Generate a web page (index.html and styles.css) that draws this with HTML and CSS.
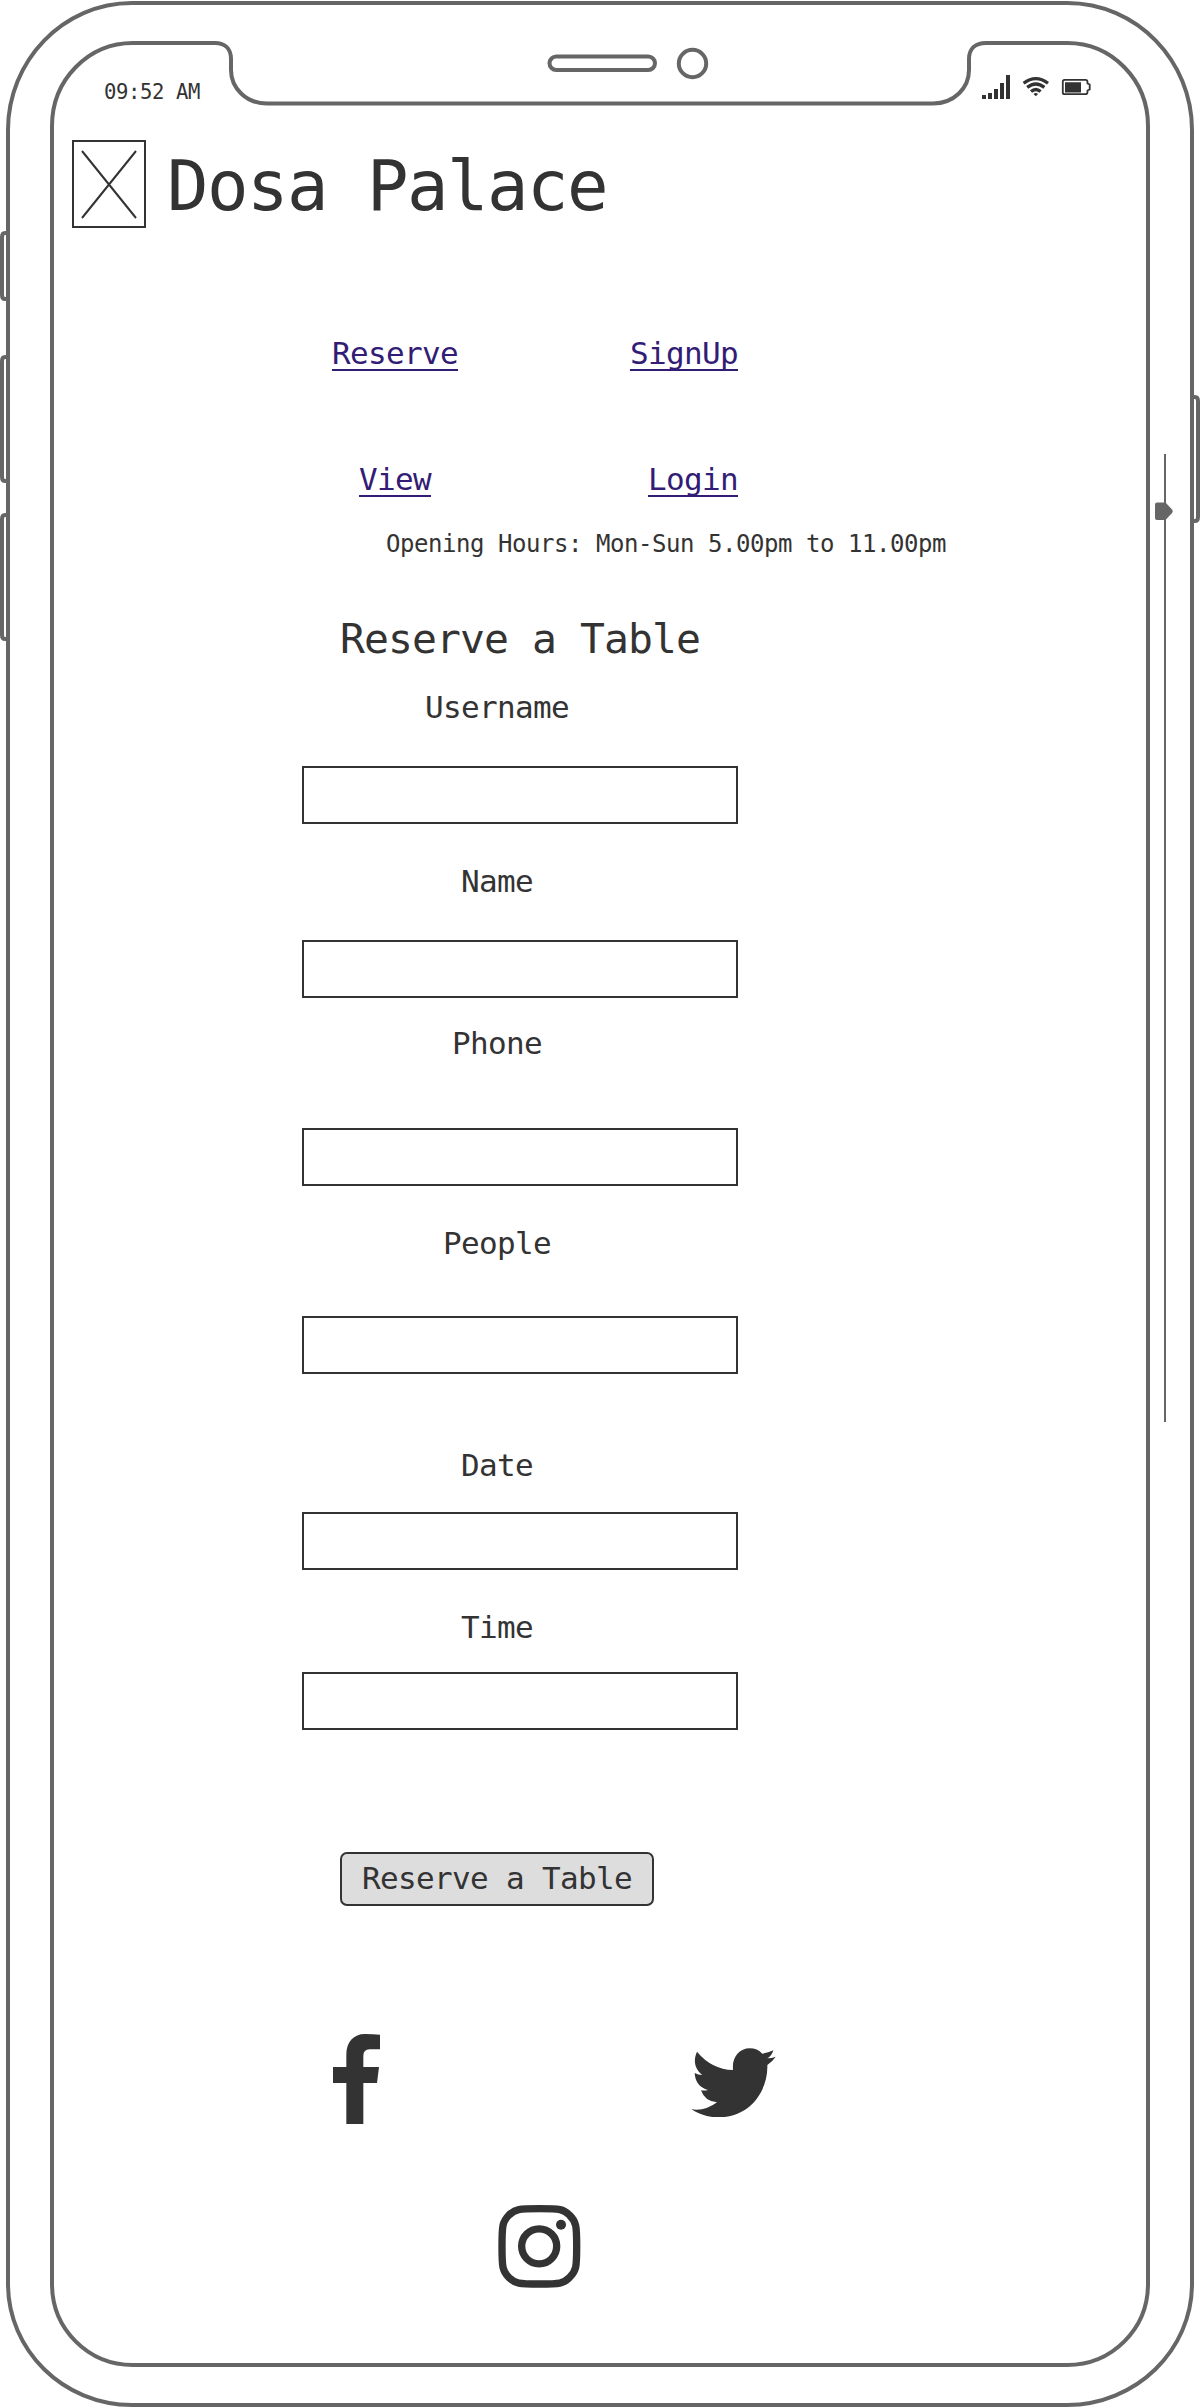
FILE: index.html
```html
<!DOCTYPE html>
<html lang="en">
<head>
<meta charset="utf-8">
<title>Dosa Palace</title>
<link rel="stylesheet" href="styles.css">
</head>
<body>
<div class="phone">
  <svg class="frame" viewBox="0 0 1200 2408" width="1200" height="2408" aria-hidden="true">
    <g fill="none" stroke="#666" stroke-width="4">
      <path d="M132 3H1067C1137 3 1192 61 1192 130V2284C1192 2350 1136 2405 1067 2405H132C63 2405 8 2350 8 2284V130C8 61 63 3 132 3Z"/>
      <path d="M133 43H215C225 43 231 49 231 59V70C231 88 246 103.500 267 103.500H933C954 103.500 969 88 969 70V59C969 49 975 43 986 43H1067C1112 43 1148 80 1148 126V2284C1148 2329 1112 2365 1067 2365H133C88 2365 52 2329 52 2284V126C52 80 88 43 133 43Z"/>
      <rect x="549.500" y="56.500" width="105.500" height="13.500" rx="6.750"/>
      <circle cx="692.500" cy="63.500" r="13.700"/>
      <path d="M8 233H5Q2 233 2 237V295Q2 299 5 299H8M8 357H5Q2 357 2 361V477Q2 481 5 481H8M8 515H5Q2 515 2 519V635Q2 639 5 639H8M1192 397H1195Q1198 397 1198 401V517Q1198 521 1195 521H1192"/>
    </g>
    <path fill="#666" d="M1164 454h2V1422h-2Z"/>
    <path fill="#666" d="M1157 502.500H1165.500L1171.800 509.200Q1173.500 511.300 1171.800 513.300L1165.500 520H1157Q1155 520 1155 518V504.500Q1155 502.500 1157 502.500Z"/>
  </svg>

  <main class="screen">
    <div class="status">
      <span class="time">09:52 AM</span>
      <svg class="status-icons" viewBox="982 74 110 26" width="110" height="26">
        <path fill="#333" d="M982 95h4v4h-4ZM988 93h4v6h-4ZM994 89h4v10h-4ZM1000 83h4v16h-4ZM1006 75h4v24h-4ZM1065 82.300h16v10.200h-16Z"/>
        <g fill="none" stroke="#333" stroke-width="3.300">
          <path d="M1023.600 83.200Q1035.800 74 1048 83.200"/>
          <path d="M1027.200 87.400Q1035.800 80.600 1044.400 87.400"/>
          <path d="M1031 91.600Q1035.800 87.400 1040.600 91.600"/>
        </g>
        <path fill="#333" d="M1033.500 94Q1035.800 92.200 1038.100 94L1035.800 96.300Z"/>
        <path fill="none" stroke="#333" stroke-width="1.800" d="M1064.500 79.800H1085.500Q1087.500 79.800 1087.500 82V83.500L1089.700 84.500V89.500L1087.500 90.500V92Q1087.500 94.200 1085.500 94.200H1064.500Q1062.800 94.200 1062.800 92.500V81.500Q1062.800 79.800 1064.500 79.800Z"/>
      </svg>
    </div>

    <header class="header">
      <svg class="logo" viewBox="0 0 74 88" width="74" height="88">
        <path fill="none" stroke="#333" stroke-width="2" d="M1 1H73V87H1ZM10 11L64 78M64 11L10 78"/>
      </svg>
      <h1 class="title">Dosa Palace</h1>
    </header>

    <nav class="nav">
      <a class="link" href="#">Reserve</a>
      <a class="link link-end" href="#">SignUp</a>
      <a class="link" href="#">View</a>
      <a class="link link-end" href="#">Login</a>
    </nav>

    <p class="hours">Opening Hours: Mon-Sun 5.00pm to 11.00pm</p>

    <form class="form">
      <h2 class="form-title">Reserve a Table</h2>
      <div class="field username"><label for="username">Username</label><input id="username" type="text"></div>
      <div class="field name"><label for="name">Name</label><input id="name" type="text"></div>
      <div class="field phone-no"><label for="phone">Phone</label><input id="phone" type="text"></div>
      <div class="field people"><label for="people">People</label><input id="people" type="text"></div>
      <div class="field date"><label for="date">Date</label><input id="date" type="text"></div>
      <div class="field hour"><label for="time">Time</label><input id="time" type="text"></div>
      <button class="submit" type="button">Reserve a Table</button>
    </form>

    <footer class="social">
      <svg class="facebook" viewBox="0 0 141 270" width="47" height="90">
        <path fill="#333" d="M40 270V147H0V99H40V62C40 24 62 0 96 0Q120 0 141 2V46H110Q91 46 91 66V99H138L132 147H91V270Z"/>
      </svg>
      <svg class="twitter" viewBox="0 0 254 209" width="84.700" height="69.700">
        <path fill="#333" d="M126 66C122 28 145 1 176 1Q199 1 214 17Q231 15 247 7Q242 24 229 31Q242 31 254 26Q244 41 229 51C231 132 174 208 82 208Q38 208 1 184Q43 190 78 163Q41 160 30 127Q41 129 51 126Q13 115 11 75Q21 81 34 81C9 62 7 35 18 11Q62 64 126 66Z"/>
      </svg>
      <svg class="instagram" viewBox="0 0 248 248" width="82.700" height="82.700">
        <path fill="none" stroke="#333" stroke-width="22" d="M124 11C187 11 196 12 214 30C235 50 236 62 236 124C236 186 235 198 214 218C196 236 186 237 124 237C62 237 52 236 33 218C13 198 12 186 12 124C12 62 13 50 33 30C52 12 62 11 124 11Z"/>
        <circle cx="123.500" cy="124" r="52.500" fill="none" stroke="#333" stroke-width="22"/>
        <circle cx="189" cy="59" r="15" fill="#333"/>
      </svg>
    </footer>
  </main>
</div>
</body>
</html>
```
FILE: styles.css
```css
* { box-sizing: border-box; }

body {
  margin: 0;
  background: #fff;
  color: #333;
  font-family: "DejaVu Sans Mono", "Liberation Mono", monospace;
  font-size: 31px;
  line-height: 34px;
  letter-spacing: -0.66px;
}

h1, h2, p { margin: 0; font-weight: 400; }
svg { display: block; }

.phone { position: relative; width: 1200px; height: 2408px; overflow: hidden; }
.frame { position: absolute; top: 0; left: 0; }
.screen { position: relative; display: flex; flex-direction: column; padding: 74px 108px 0 72px; }

.status { display: flex; justify-content: space-between; height: 66px; padding-left: 32px; }
.time { margin-top: 6px; font-size: 20.6px; line-height: 24px; letter-spacing: -0.4px; }

.header { display: flex; gap: 21px; height: 88px; }
.title { margin-top: 6px; font-size: 69px; line-height: 80px; letter-spacing: -1.54px; white-space: nowrap; }

.nav {
  display: grid;
  grid-template-columns: 188px 249px;
  row-gap: 92px;
  margin: 108px 0 0 229px;
}
.link {
  justify-self: center;
  color: #331c75;
  text-decoration: underline;
  text-decoration-thickness: 2px;
  text-decoration-skip-ink: none;
  text-underline-offset: 5px;
}
.link-end { justify-self: end; }

.hours { margin: 34px 0 0 314px; font-size: 24px; line-height: 28px; letter-spacing: -0.45px; white-space: nowrap; }

.form { display: flex; flex-direction: column; width: 436px; margin: 58px 0 0 230px; }
.form-title { margin: -1px 0 1px; font-size: 41.4px; line-height: 48px; letter-spacing: -0.92px; text-align: center; }
.field { display: flex; flex-direction: column; gap: 42px; margin-top: 40px; }
.field label { padding-right: 46px; text-align: center; }
.field input {
  width: 100%;
  height: 58px;
  border: 2px solid #333;
  border-radius: 0;
  background: #fff;
  padding: 0 12px;
  font: inherit;
}
.field.username { margin-top: 26px; }
.field.phone-no { margin-top: 28px; gap: 68px; }
.field.people { gap: 56px; }
.field.date { margin-top: 74px; gap: 30px; }
.field.hour { gap: 28px; }

.submit {
  width: 314px;
  height: 54px;
  margin: 122px 0 0 38px;
  padding: 0 0 3px;
  border: 2px solid #333;
  border-radius: 7px;
  background: #ddd;
  color: inherit;
  font: inherit;
  letter-spacing: inherit;
  white-space: nowrap;
}

.social {
  display: grid;
  grid-template-columns: 358px 85px;
  margin: 128px 0 0 261px;
}
.twitter { margin-top: 13.7px; }
.instagram { grid-column: 1 / -1; margin: 81px 0 0 165px; }
```
